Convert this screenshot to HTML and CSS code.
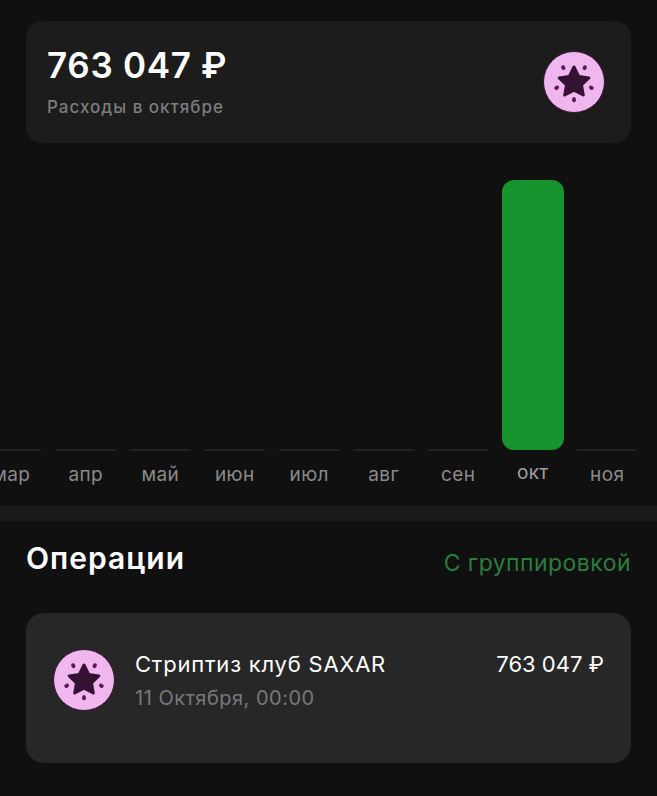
FILE: index.html
```html
<!DOCTYPE html>
<html lang="ru">
<head>
    <meta charset="UTF-8">
    <meta name="viewport" content="width=device-width, initial-scale=1.0">
    <title>Расходы</title>
    <link rel="stylesheet" href="styles.css">
</head>
<body>
    <svg class="defs" width="0" height="0" aria-hidden="true">
        <symbol id="star-badge" viewBox="0 0 62 62">
            <circle cx="31" cy="31" r="30.5" fill="#efb6ef" stroke="#3a1538" stroke-width="1"/>
            <path d="M31 16l4.8 9.6 10 1.4-7.3 7 1.8 10-9.3-4.9-9.3 4.9 1.8-10-7.3-7 10-1.4z" fill="#341232" stroke="#341232" stroke-width="3" stroke-linejoin="round"/>
            <ellipse cx="20.3" cy="16.7" rx="2" ry="2.5" fill="#5a1a58" transform="rotate(-30 20.3 16.7)"/>
            <ellipse cx="41.7" cy="16.7" rx="2" ry="2.5" fill="#5a1a58" transform="rotate(30 41.7 16.7)"/>
            <ellipse cx="13.7" cy="36.7" rx="2" ry="2.5" fill="#5a1a58" transform="rotate(60 13.7 36.7)"/>
            <ellipse cx="48.3" cy="36.7" rx="2" ry="2.5" fill="#5a1a58" transform="rotate(-60 48.3 36.7)"/>
            <ellipse cx="31" cy="48.7" rx="2" ry="2.6" fill="#5a1a58"/>
        </symbol>
    </svg>

    <section class="summary">
        <div>
            <div class="summary-amount">763 047 ₽</div>
            <div class="summary-label">Расходы в октябре</div>
        </div>
        <svg class="badge"><use href="#star-badge"/></svg>
    </section>

    <section class="chart">
        <div class="month"><div class="tick"></div><span>мар</span></div>
        <div class="month"><div class="tick"></div><span>апр</span></div>
        <div class="month"><div class="tick"></div><span>май</span></div>
        <div class="month"><div class="tick"></div><span>июн</span></div>
        <div class="month"><div class="tick"></div><span>июл</span></div>
        <div class="month"><div class="tick"></div><span>авг</span></div>
        <div class="month"><div class="tick"></div><span>сен</span></div>
        <div class="month month-active"><div class="bar"></div><span>окт</span></div>
        <div class="month"><div class="tick"></div><span>ноя</span></div>
    </section>

    <div class="divider"></div>

    <section class="operations">
        <div class="operations-head">
            <h2>Операции</h2>
            <span class="group-link">С группировкой</span>
        </div>
        <div class="operation">
            <svg class="badge badge-small"><use href="#star-badge"/></svg>
            <div class="operation-info">
                <div class="operation-name">Стриптиз клуб SAXAR</div>
                <div class="operation-date">11 Октября, 00:00</div>
            </div>
            <div class="operation-sum">763 047 ₽</div>
        </div>
    </section>
</body>
</html>
```

FILE: styles.css
```css
html, body {
    height: 100%;
}
body {
    margin: 0;
    background-color: #101011;
    color: #fff;
    font-family: Inter, "Noto Sans", sans-serif;
    overflow: hidden;
}
.defs {
    position: absolute;
}
.summary {
    display: flex;
    justify-content: space-between;
    align-items: center;
    height: 122px;
    margin: 21px 26px 0;
    padding: 0 26px 0 21px;
    background-color: #1c1c1d;
    border-radius: 16px;
}
.summary-amount {
    margin-top: -4px;
    font-size: 35px;
    font-weight: 600;
    line-height: 42px;
    letter-spacing: 0.7px;
}
.summary-label {
    margin-top: 11px;
    font-size: 17px;
    font-weight: 500;
    letter-spacing: 1px;
    color: #7c7c7c;
}
.badge {
    display: block;
    width: 62px;
    height: 62px;
}
.chart {
    display: flex;
    margin: 37px 0 0 -26px;
    width: 700px;
}
.month {
    display: flex;
    flex-direction: column;
    align-items: center;
    justify-content: flex-end;
    width: 74.5px;
    height: 270px;
    position: relative;
}
.month span {
    position: absolute;
    top: 284px;
    font-size: 19px;
    letter-spacing: 0.4px;
    color: #8a8a8a;
    line-height: 22px;
}
.month-active span {
    top: 282px;
    color: #a0a0a0;
}
.tick {
    width: 60px;
    height: 2px;
    margin-bottom: -1px;
    background-color: #222223;
}
.bar {
    width: 62px;
    height: 270px;
    background-color: #17932d;
    border-radius: 12px;
}
.divider {
    height: 15px;
    margin-top: 56px;
    background-color: #1b1b1c;
}
.operations {
    padding: 0 26px;
}
.operations-head {
    display: flex;
    justify-content: space-between;
    align-items: center;
    margin-top: 15px;
    height: 44px;
}
.operations-head h2 {
    margin: 0;
    font-size: 30px;
    font-weight: 600;
    letter-spacing: 1px;
}
.group-link {
    margin-top: 10px;
    font-size: 23px;
    letter-spacing: 0.45px;
    color: #2a7d3c;
}
.operation {
    display: flex;
    align-items: flex-start;
    height: 150px;
    margin-top: 33px;
    padding: 36px 27px 0;
    box-sizing: border-box;
    background-color: #272728;
    border-radius: 18px;
}
.operation-info {
    flex: 1;
    margin-left: 20px;
}
.operation-name {
    margin-top: 1px;
    font-size: 22px;
    line-height: 28px;
    letter-spacing: 0.78px;
}
.operation-date {
    margin-top: 8px;
    font-size: 20px;
    line-height: 24px;
    letter-spacing: 0.5px;
    color: #77777a;
}
.operation-sum {
    margin-top: 1px;
    font-size: 22px;
    line-height: 28px;
}
```
